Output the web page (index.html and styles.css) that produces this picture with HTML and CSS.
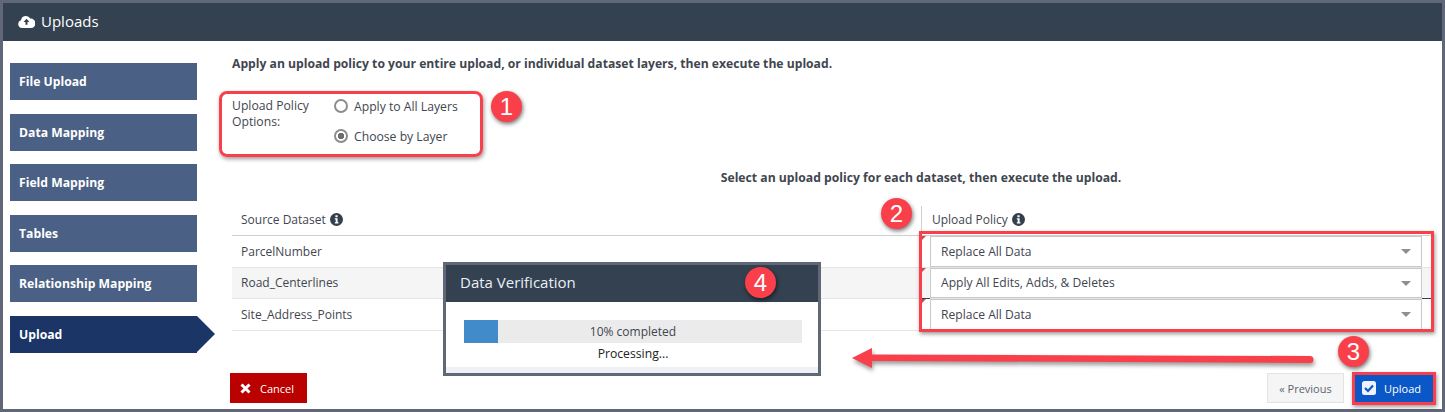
FILE: index.html
```html
<!DOCTYPE html>
<html lang="en">
<head>
    <meta charset="UTF-8">
    <title>Uploads</title>
    <link rel="stylesheet" href="styles.css">
</head>
<body>
    <div class="frame">
        <header class="topbar">
            <svg class="cloud" width="17" height="13" viewBox="0 0 17 13"><path fill="#fff" d="M4 13a4 4 0 0 1-1-7.800A5 5 0 0 1 12.300 3.600A4.700 4.700 0 0 1 13 13z"/><path fill="#334150" d="M8.500 3.800l3 3.200H9.500v2.800h-2V7H5.500z"/></svg>
            <span>Uploads</span>
        </header>
        <div class="main">
            <nav class="steps">
                <a class="step">File Upload</a>
                <a class="step">Data Mapping</a>
                <a class="step">Field Mapping</a>
                <a class="step">Tables</a>
                <a class="step">Relationship Mapping</a>
                <a class="step active">Upload</a>
            </nav>
            <section class="content">
                <p class="intro">Apply an upload policy to your entire upload, or individual dataset layers, then execute the upload.</p>
                <div class="options">
                    <div class="options-label">Upload Policy Options:</div>
                    <div class="radios">
                        <div class="radio"><i class="dot"></i>Apply to All Layers</div>
                        <div class="radio"><i class="dot checked"></i>Choose by Layer</div>
                    </div>
                </div>
                <p class="select-note">Select an upload policy for each dataset, then execute the upload.</p>
                <div class="table">
                    <div class="row head">
                        <div class="cell">Source Dataset <svg class="info" width="13" height="13" viewBox="0 0 13 13"><circle cx="6.500" cy="6.500" r="6.500" fill="#333f4c"/><path fill="#fff" d="M5.400 2.300h2.200v1.900H5.400zM4.800 5.300h2.800v4h.9v1.300h-3.700V9.300h.9V6.600h-.9z"/></svg></div>
                        <div class="cell policy-head">Upload Policy <svg class="info" width="13" height="13" viewBox="0 0 13 13"><circle cx="6.500" cy="6.500" r="6.500" fill="#333f4c"/><path fill="#fff" d="M5.400 2.300h2.200v1.900H5.400zM4.800 5.300h2.800v4h.9v1.300h-3.700V9.300h.9V6.600h-.9z"/></svg></div>
                    </div>
                    <div class="row">
                        <div class="cell">ParcelNumber</div>
                        <div class="cell policy"><div class="select">Replace All Data</div></div>
                    </div>
                    <div class="row alt">
                        <div class="cell">Road_Centerlines</div>
                        <div class="cell policy dark"><div class="select">Apply All Edits, Adds, &amp; Deletes</div></div>
                    </div>
                    <div class="row">
                        <div class="cell">Site_Address_Points</div>
                        <div class="cell policy dark"><div class="select">Replace All Data</div></div>
                    </div>
                </div>
                <div class="actions">
                    <button class="btn cancel"><svg width="11" height="11" viewBox="0 0 11 11"><path fill="none" stroke="#fff" stroke-width="3" d="M1.500 1.500l8 8M9.500 1.500l-8 8"/></svg>Cancel</button>
                    <div class="actions-right">
                        <button class="btn prev">« Previous</button>
                        <button class="btn upload"><svg width="14" height="14" viewBox="0 0 14 14"><rect width="14" height="14" rx="2.500" fill="#eef3fb"/><path fill="none" stroke="#0b55c4" stroke-width="2.200" d="M3 7l3 3 5-5.500"/></svg>Upload</button>
                    </div>
                </div>
            </section>
        </div>
    </div>

    <!-- dialog + callouts sit on top of the page -->
    <div class="dialog">
        <div class="dialog-title">Data Verification</div>
        <div class="dialog-body">
            <div class="progress"><div class="progress-fill" style="width:10%"></div><span>10% completed</span></div>
            <div class="progress-text">Processing...</div>
        </div>
        <div class="dialog-foot"></div>
    </div>

    <div class="callout box-one"></div>
    <div class="callout box-two"></div>
    <div class="callout box-three"></div>
    <div class="badge b1">1</div>
    <div class="badge b2">2</div>
    <div class="badge b3">3</div>
    <div class="badge b4">4</div>
    <svg class="arrow" width="462" height="24" viewBox="0 0 462 24"><path fill="#f9404a" d="M0 11L20 1V7.500L458 9a3.500 3.500 0 0 1 0 7L20 14V21z"/></svg>
</body>
</html>
```

FILE: styles.css
```css
* {
    box-sizing: border-box;
}
body {
    margin: 0;
    width: 1445px;
    height: 412px;
    overflow: hidden;
    position: relative;
    font-family: "Open Sans", "Noto Sans", sans-serif;
    font-size: 12px;
    color: #3f4650;
    background-color: #ffffff;
}
.frame {
    height: 412px;
    border: 3px solid #5f6779;
    display: flex;
    flex-direction: column;
}
.topbar {
    height: 38px;
    flex: none;
    background-color: #334150;
    color: #ffffff;
    font-size: 15px;
    display: flex;
    align-items: center;
    gap: 6px;
    padding: 0 0 2px 15px;
}
.main {
    flex: 1;
    display: flex;
}
.steps {
    width: 187px;
    margin: 22px 0 0 7px;
    flex: none;
    display: flex;
    flex-direction: column;
    gap: 13.600px;
}
.step {
    height: 37px;
    background-color: #4a6084;
    color: #ffffff;
    font-size: 12.200px;
    font-weight: 700;
    padding-left: 9px;
    display: flex;
    align-items: center;
    position: relative;
}
.step.active {
    background-color: #1b3666;
}
.step.active::after {
    content: "";
    position: absolute;
    left: 100%;
    top: 0;
    border-style: solid;
    border-width: 18.500px 0 18.500px 18px;
    border-color: transparent transparent transparent #1b3666;
}
.content {
    flex: 1;
    padding: 0 10px 0 35px;
    display: flex;
    flex-direction: column;
}
.intro {
    margin: 15px 0 0;
    font-size: 12.170px;
    font-weight: 700;
    line-height: 16px;
}
.options {
    display: flex;
    margin-top: 26px;
    height: 60px;
    font-size: 12.200px;
}
.options-label {
    width: 102px;
    line-height: 16px;
}
.radio {
    display: flex;
    align-items: center;
    gap: 6px;
    height: 16px;
    margin-bottom: 14px;
}
.dot {
    width: 14px;
    height: 14px;
    border: 2px solid #8d8d8d;
    border-radius: 50%;
    display: block;
    background-color: #ffffff;
}
.dot.checked {
    background: radial-gradient(circle, #6e6e6e 0 3px, #ffffff 3.500px);
}
.select-note {
    margin: 12px 0 0;
    font-size: 12.200px;
    font-weight: 700;
    line-height: 16px;
    text-align: center;
    padding-left: 353px;
    width: 1091px;
    padding-right: 66px;
}
.table {
    margin-top: 20px;
}
.row {
    display: grid;
    grid-template-columns: 689px 1fr;
    height: 31.500px;
    border-bottom: 1px solid #e4e4e4;
}
.row.head {
    height: 30px;
    border-bottom: 1px solid #cfcfcf;
}
.row.alt {
    background-color: #f5f5f5;
}
.cell {
    padding-left: 9px;
    display: flex;
    align-items: center;
    gap: 4px;
}
.head .cell {
    padding-bottom: 2px;
}
.head .policy-head {
    border-left: 1px solid #cfcfcf;
    padding-left: 10px;
}
.policy {
    padding: 0 10px 0 9px;
    position: relative;
}
.policy.dark {
    box-shadow: 0 1px 0 #333f4c;
}
.policy::before {
    content: "";
    position: absolute;
    left: 0;
    top: 0;
    border-style: solid;
    border-width: 5px 5px 0 0;
    border-color: #d04a4a transparent transparent transparent;
}
.select {
    width: 100%;
    height: 100%;
    border: 1px solid #c9c9c9;
    box-shadow: 0 1px 0 #e4e4e4;
    background-color: #ffffff;
    padding-left: 10px;
    display: flex;
    align-items: center;
    position: relative;
    font-size: 12.100px;
}
.select::after {
    content: "";
    position: absolute;
    right: 10px;
    top: 12px;
    border-style: solid;
    border-width: 5px 5px 0 5px;
    border-color: #8f8f8f transparent transparent transparent;
}
.actions {
    margin-top: auto;
    margin-bottom: 6px;
    margin-left: -2px;
    margin-right: -1px;
    display: flex;
    justify-content: space-between;
    align-items: flex-end;
}
.actions-right {
    display: flex;
    gap: 11px;
}
.btn {
    height: 30px;
    border: 0;
    font-family: inherit;
    font-size: 11px;
    display: flex;
    align-items: center;
}
.cancel {
    width: 77px;
    background-color: #bb0000;
    color: #ffffff;
    padding-left: 10px;
    gap: 9px;
}
.prev {
    width: 77px;
    justify-content: center;
    background-color: #f5f5f5;
    border: 1px solid #e3e3e3;
    color: #5c6470;
}
.upload {
    width: 78px;
    background-color: #0a57c8;
    color: #ffffff;
    padding-left: 7px;
    gap: 8px;
}
.dialog {
    position: absolute;
    left: 443px;
    top: 262px;
    width: 378px;
    height: 114px;
    border: 3px solid #5f6779;
    background-color: #ffffff;
    display: flex;
    flex-direction: column;
}
.dialog-title {
    height: 37px;
    flex: none;
    background-color: #334150;
    color: #e9f0f6;
    font-size: 15px;
    padding: 0 0 4px 14px;
    display: flex;
    align-items: center;
}
.dialog-body {
    flex: 1;
    padding: 18px 16px 0 18px;
}
.progress {
    height: 23px;
    background-color: #ebebeb;
    position: relative;
    display: flex;
    align-items: center;
    justify-content: center;
    font-size: 12px;
}
.progress-fill {
    position: absolute;
    left: 0;
    top: 0;
    bottom: 0;
    background-color: #428bca;
}
.progress span {
    position: relative;
}
.progress-text {
    text-align: center;
    font-size: 12.200px;
    line-height: 22px;
    color: #222222;
}
.dialog-foot {
    height: 6px;
    flex: none;
    background-color: #f0f1f4;
}
.callout {
    position: absolute;
    border: 3px solid #f9404a;
    box-shadow: 1px 2px 4px rgba(0, 0, 0, 0.4);
}
.box-one {
    left: 219px;
    top: 91px;
    width: 264px;
    height: 66px;
    border-radius: 8px;
}
.box-two {
    left: 919px;
    top: 231px;
    width: 515px;
    height: 101px;
}
.box-three {
    left: 1352px;
    top: 372px;
    width: 84px;
    height: 33px;
}
.badge {
    position: absolute;
    width: 31px;
    height: 31px;
    border-radius: 50%;
    background-color: #f9404a;
    color: #ffffff;
    font-family: "Liberation Sans", sans-serif;
    font-size: 24px;
    line-height: 31px;
    text-align: center;
    box-shadow: 1px 2px 4px rgba(0, 0, 0, 0.55);
}
.b1 {
    left: 491px;
    top: 91px;
}
.b2 {
    left: 881px;
    top: 198px;
}
.b3 {
    left: 1338px;
    top: 336px;
}
.b4 {
    left: 745px;
    top: 267px;
}
.arrow {
    position: absolute;
    left: 852px;
    top: 347px;
    filter: drop-shadow(1px 3px 2px rgba(0, 0, 0, 0.4));
}
```
